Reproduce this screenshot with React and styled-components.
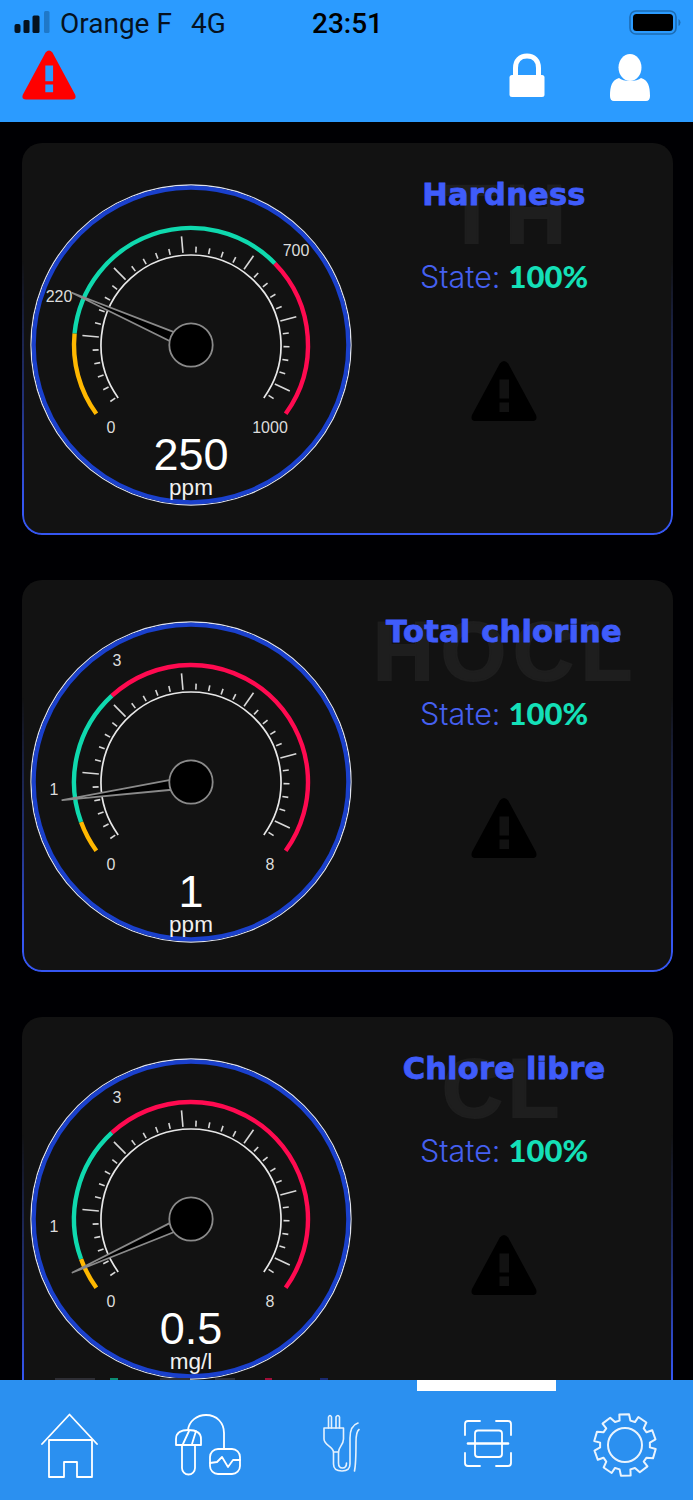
import React from 'react';
import styled, { createGlobalStyle } from 'styled-components';

const GlobalStyle = createGlobalStyle`
	html, body {
		margin: 0;
		padding: 0;
		background: #000;
	}
	#root {
		width: 693px;
		height: 1500px;
	}
`;

const Page = styled.div`
	width: 693px;
	height: 1500px;
	display: flex;
	flex-direction: column;
	overflow: hidden;
	background: #000003;
	font-family: "Liberation Sans", Arial, sans-serif;
`;

const Header = styled.header`
	height: 122px;
	flex: none;
	background: #2b9bff;
	box-sizing: border-box;
`;

const StatusBar = styled.div`
	height: 46px;
	display: grid;
	grid-template-columns: 1fr auto 1fr;
	align-items: center;
	padding: 0 12px 0 14px;
	font-family: Roboto, "Liberation Sans", sans-serif;
	font-size: 28px;
	color: #06121f;
`;

const Carrier = styled.div`
	display: flex;
	align-items: center;
	gap: 10px;
`;

const NetworkType = styled.span`
	margin-left: 9px;
`;

const Clock = styled.div`
	font-weight: 500;
	font-size: 28px;
	color: #000;
`;

const BatteryBox = styled.div`
	display: flex;
	justify-content: flex-end;
`;

const ActionBar = styled.div`
	display: flex;
	align-items: flex-start;
	padding: 4px 43px 0 22px;
`;

const ActionSpacer = styled.div`
	flex: 1;
`;

const ActionIcons = styled.div`
	display: flex;
	align-items: flex-start;
	gap: 65px;
	padding-top: 3px;
`;

const Main = styled.main`
	flex: 1;
	min-height: 0;
	position: relative;
	overflow: hidden;
	padding: 21px 20px 0 22px;
	display: flex;
	flex-direction: column;
	gap: 45px;
`;

const Card = styled.section`
	position: relative;
	flex: none;
	height: 392px;
	box-sizing: border-box;
	display: flex;
	padding: 37px 0 0 4px;
	background: #121212;
	border-radius: 20px;

	&::after {
		content: "";
		position: absolute;
		inset: 0;
		border: 2px solid #3556f2;
		border-radius: 20px;
		pointer-events: none;
		-webkit-mask-image: linear-gradient(to bottom, transparent 30%, rgba(0, 0, 0, 0.45) 65%, #000 92%);
		mask-image: linear-gradient(to bottom, transparent 30%, rgba(0, 0, 0, 0.45) 65%, #000 92%);
	}
`;

const GaugeSvg = styled.svg`
	display: block;
	flex: none;
	width: 330px;
	height: 330px;
`;

const GaugeLabel = styled.text`
	font-family: "Liberation Sans", Arial, sans-serif;
	font-size: 16px;
	fill: #dcdcdc;
	text-anchor: middle;
	dominant-baseline: central;
`;

const GaugeValue = styled.text`
	font-family: "Liberation Sans", Arial, sans-serif;
	font-size: 45px;
	fill: #fff;
	text-anchor: middle;
`;

const GaugeUnit = styled.text`
	font-family: "Liberation Sans", Arial, sans-serif;
	font-size: 22.5px;
	fill: #f0f0f0;
	text-anchor: middle;
`;

const Info = styled.div`
	position: relative;
	flex: 1;
	display: flex;
	flex-direction: column;
	align-items: center;
	padding: 0 21px 0 0;
	margin-top: -37px;
`;

const Watermark = styled.div`
	position: absolute;
	left: ${p => p.$left}px;
	top: 35px;
	font-family: "Liberation Sans", Arial, sans-serif;
	font-weight: 700;
	font-size: 84px;
	line-height: 72px;
	letter-spacing: ${p => p.$spacing}px;
	color: #1e1e1e;
	-webkit-text-stroke: 2px #1e1e1e;
	white-space: nowrap;
`;

const Title = styled.h2`
	position: relative;
	margin: 32px 0 0;
	height: 40px;
	font-family: "DejaVu Sans", "Liberation Sans", sans-serif;
	font-weight: 700;
	font-size: 30.5px;
	line-height: 40px;
	letter-spacing: 0.2px;
	color: #3f5cfb;
	-webkit-text-stroke: 0.8px #3f5cfb;
	white-space: nowrap;
`;

const StateRow = styled.div`
	position: relative;
	margin-top: 41px;
	display: flex;
	align-items: baseline;
	gap: 8px;
	height: 40px;
	line-height: 40px;
`;

const StateLabel = styled.span`
	font-family: Inter, Roboto, sans-serif;
	font-weight: 300;
	font-size: 30.5px;
	color: #4560f0;
`;

const StateValue = styled.span`
	font-family: Lato, "Liberation Sans", sans-serif;
	font-weight: 900;
	font-size: 31px;
	color: #14e0b8;
`;

const CardWarning = styled.div`
	margin-top: 65px;
`;

const ClippedLegend = styled.div`
	position: absolute;
	left: 0;
	bottom: 0;
	display: flex;
`;

const LegendDash = styled.span`
	margin-left: ${p => p.$gap}px;
	width: ${p => p.$w}px;
	height: 2px;
	background: ${p => p.$color};
`;

const TabBar = styled.nav`
	position: relative;
	flex: none;
	height: 120px;
	background: #2b90f0;
	display: grid;
	grid-template-columns: 140px 124px 150px 132px 1fr;
	align-items: start;
	padding-top: 33px;
	box-sizing: border-box;
`;

const ActiveMark = styled.div`
	position: absolute;
	left: 417px;
	top: 0;
	width: 139px;
	height: 11px;
	background: #fff;
`;

const Tab = styled.div`
	display: flex;
	padding-left: ${p => p.$pad}px;
	padding-top: ${p => p.$top || 0}px;
	svg {
		display: block;
	}
`;

const rad = d => (d - 90) * Math.PI / 180;
const polar = (angle, r) => [165 + r * Math.cos(rad(angle)), 165 + r * Math.sin(rad(angle))];

const arcPath = (from, to, r) => {
	const [x1, y1] = polar(from, r);
	const [x2, y2] = polar(to, r);
	return `M${x1} ${y1}A${r} ${r} 0 ${to - from > 180 ? 1 : 0} 1 ${x2} ${y2}`;
};

const ticks = Array.from({ length: 32 }, (_, i) => i);

const Gauge = ({ zones, labels, needle, value, unit }) => (
	<GaugeSvg viewBox="0 0 330 330">
		<circle cx="165" cy="165" r="160" fill="none" stroke="#dfe2ec" strokeWidth="1.3" />
		<circle cx="165" cy="165" r="157.3" fill="none" stroke="#1a40cc" strokeWidth="4.2" />
		{zones.map((z, i) => (
			<path key={i} d={arcPath(z.from, z.to, 117)} fill="none" stroke={z.color} strokeWidth="4.4" />
		))}
		<path d={arcPath(-126, 126, 90)} fill="none" stroke="#e8e8e8" strokeWidth="1.7" />
		{ticks.map(i => {
			const angle = -125 + i * 8;
			const major = i > 0 && i % 5 === 0;
			const [x1, y1] = polar(angle, 92.5);
			const [x2, y2] = polar(angle, major ? 109 : 98.5);
			return <line key={i} x1={x1} y1={y1} x2={x2} y2={y2} stroke="#d8d8d8" strokeWidth="1.6" />;
		})}
		{labels.map(l => (
			<GaugeLabel key={l.text} x={165 + l.x} y={165 + l.y}>{l.text}</GaugeLabel>
		))}
		<GaugeValue x="165" y="290">{value}</GaugeValue>
		<GaugeUnit x="165" y="315">{unit}</GaugeUnit>
		<polygon
			points="165,35 160,145 170,145"
			fill="#000"
			stroke="#8a8a8a"
			strokeWidth="1.8"
			strokeLinejoin="round"
			transform={`rotate(${needle} 165 165)`}
		/>
		<circle cx="165" cy="165" r="21.7" fill="#000" stroke="#8a8a8a" strokeWidth="1.8" />
	</GaugeSvg>
);

const WARNING = 'M28.8 2.5Q33-2.5 37.2 2.5L65 54Q67 60 61 60H5Q-1 60 1 54ZM28.5 18.5H38V37.5H28.5ZM28.5 41.5H38V51H28.5Z';

const WarningIcon = ({ width, height, color }) => (
	<svg width={width} height={height} viewBox="0 0 66 60" style={{ display: 'block' }}>
		<path d={WARNING} fill={color} fillRule="evenodd" />
	</svg>
);

const SignalIcon = () => (
	<svg width="36" height="24" viewBox="0 0 36 24" style={{ display: 'block' }}>
		<rect x="0.5" y="13" width="6" height="9" rx="2" fill="#06121f" />
		<rect x="9.5" y="9" width="6" height="13" rx="1.5" fill="#06121f" />
		<rect x="18.5" y="4.5" width="7" height="17.5" rx="1.5" fill="#06121f" />
		<rect x="30" y="0" width="5.5" height="22" rx="1.5" fill="#1f78c8" />
	</svg>
);

const BatteryIcon = () => (
	<svg width="52" height="26" viewBox="0 0 52 26" style={{ display: 'block' }}>
		<rect x="1" y="1" width="46" height="23" rx="6" fill="none" stroke="#1d6cb4" strokeWidth="1.6" />
		<rect x="4" y="4" width="40" height="17" rx="3.5" fill="#000" />
		<path d="M49.5 9Q51.5 10 51.5 12.5T49.5 16Z" fill="#1d6cb4" />
	</svg>
);

const LockIcon = () => (
	<svg width="36" height="44" viewBox="0 0 36 44" style={{ display: 'block' }}>
		<path d="M6.5 24V15C6.5 7.5 11 3 18 3S29.5 7.5 29.5 15V24" fill="none" stroke="#fff" strokeWidth="5" />
		<rect x="0.5" y="22" width="35" height="22" rx="2.5" fill="#fff" />
	</svg>
);

const UserIcon = () => (
	<svg width="40" height="47" viewBox="0 0 40 47" style={{ display: 'block', marginTop: 1 }}>
		<path d="M4 47Q0 47 0 42C0 32 2 26 9 24C13 28 27 28 31 24C38 26 40 32 40 42Q40 47 36 47Z" fill="#fff" />
		<ellipse cx="20" cy="13.5" rx="11.5" ry="13.5" fill="#fff" />
	</svg>
);

const lineProps = {
	fill: 'none',
	stroke: '#fff',
	strokeWidth: 1.8,
	strokeLinecap: 'round',
	strokeLinejoin: 'round',
};

const HomeIcon = () => (
	<svg width="57" height="66" viewBox="-1 -1 57 66" {...lineProps}>
		<path d="M0 30L27.5 0.5L55 30" />
		<path d="M7 26H50V63H35V48H22V63H7Z" />
	</svg>
);

const ProbeIcon = () => (
	<svg width="67" height="62" viewBox="-1 -1 67 62" {...lineProps}>
		<path d="M1 30V24C1 17 7 15 13 15C20 15 26 17 26 24V30Z" />
		<path d="M8 29L14 16M17 29L21 16" />
		<path d="M7 30V53A6.5 6.5 0 0 0 20 53V30" />
		<path d="M13 15C14 6 22 0 31 0C42 0 49 8 49 18V34" />
		<rect x="35" y="34" width="30" height="25" rx="8" />
		<path d="M35 48L42 47L47 42L53 52L58 45H65" />
	</svg>
);

const PlugIcon = () => (
	<svg width="38" height="60" viewBox="-1 -1 38 60" {...lineProps} strokeWidth="1.6" opacity="0.88">
		<path d="M5.5 14V3Q7 0 8.5 3V14M13 14V3Q15 0 16.5 3V14" />
		<path d="M1 14H20.5V25C20.5 31 15.5 33 15.5 38H10.5C10.5 33 1 31 1 25Z" />
		<path d="M10.5 38V50C10.5 55 14 57 19 57C24 57 27 55 27 50V24C27 16 29 11 35 9" />
		<path d="M15.5 38V49C15.5 53 17 54 19.5 54C22.5 54 23.5 52 23.5 49" />
		<path d="M31.5 57C33 50 33 40 33 28C33 20 34 17 36 15.5" />
	</svg>
);

const ScanIcon = () => (
	<svg width="50" height="49" viewBox="-1 -1 50 49" {...lineProps}>
		<path d="M16 1H4Q1 1 1 4V15M32 1H44Q47 1 47 4V15M1 33V43Q1 46 4 46H16M47 33V43Q47 46 44 46H32" />
		<rect x="11" y="10.5" width="27" height="26.5" rx="3" />
		<path d="M4 23.5H44" strokeWidth="2.6" />
	</svg>
);

const gearPath = () => {
	const teeth = 10;
	const pts = [];
	for (let i = 0; i < teeth; i++) {
		const step = 360 / teeth;
		const a = i * step - 90;
		[[-10.5, 31], [10.5 - 3, 31], [10.5 + 2, 25], [step - 12.5, 25]].forEach(([off, r]) => {
			const t = (a + off) * Math.PI / 180;
			pts.push(`${(32 + r * Math.cos(t)).toFixed(2)} ${(32 + r * Math.sin(t)).toFixed(2)}`);
		});
	}
	return `M${pts.join('L')}Z`;
};

const GearIcon = () => (
	<svg width="64" height="64" viewBox="0 0 64 64" {...lineProps} strokeWidth="2" opacity="0.9">
		<path d={gearPath()} />
		<circle cx="32" cy="32" r="17" />
	</svg>
);

const YELLOW = '#ffb800';
const GREEN = '#0fd9ae';
const RED = '#ff0a50';

const cards = [
	{
		title: 'Hardness',
		mark: 'TH',
		markLeft: 90,
		markSpacing: 8,
		value: '250',
		unit: 'ppm',
		needle: -66.3,
		zones: [
			{ from: -126, to: -84.3, color: YELLOW },
			{ from: -84.3, to: 45.8, color: GREEN },
			{ from: 45.8, to: 126, color: RED },
		],
		labels: [
			{ text: '0', x: -80, y: 82 },
			{ text: '1000', x: 79, y: 82 },
			{ text: '700', x: 105, y: -95 },
			{ text: '220', x: -132, y: -49 },
		],
	},
	{
		title: 'Total chlorine',
		mark: 'HOCL',
		markLeft: 17,
		markSpacing: 7,
		value: '1',
		unit: 'ppm',
		needle: -98,
		zones: [
			{ from: -126, to: -110, color: YELLOW },
			{ from: -110, to: -42.5, color: GREEN },
			{ from: -42.5, to: 126, color: RED },
		],
		labels: [
			{ text: '0', x: -80, y: 82 },
			{ text: '8', x: 79, y: 82 },
			{ text: '3', x: -74, y: -122 },
			{ text: '1', x: -137, y: 7 },
		],
	},
	{
		title: 'Chlore libre',
		mark: 'CL',
		markLeft: 86,
		markSpacing: 5,
		value: '0.5',
		unit: 'mg/l',
		needle: -114.3,
		zones: [
			{ from: -126, to: -110, color: YELLOW },
			{ from: -110, to: -42.5, color: GREEN },
			{ from: -42.5, to: 126, color: RED },
		],
		labels: [
			{ text: '0', x: -80, y: 82 },
			{ text: '8', x: 79, y: 82 },
			{ text: '3', x: -74, y: -122 },
			{ text: '1', x: -137, y: 7 },
		],
	},
];

// tops of a text line that the tab bar cuts off
const legendDashes = [
	{ gap: 55, w: 40, color: '#2e2e34' },
	{ gap: 15, w: 8, color: '#0c8c74' },
	{ gap: 42, w: 30, color: '#2e2e34' },
	{ gap: 25, w: 20, color: '#2e2e34' },
	{ gap: 30, w: 7, color: '#a00e38' },
	{ gap: 48, w: 8, color: '#1a2a70' },
];

const App = () => (
	<Page>
		<GlobalStyle />
		<Header>
			<StatusBar>
				<Carrier>
					<SignalIcon />
					<span>Orange F</span>
					<NetworkType>4G</NetworkType>
				</Carrier>
				<Clock>23:51</Clock>
				<BatteryBox><BatteryIcon /></BatteryBox>
			</StatusBar>
			<ActionBar>
				<WarningIcon width={54} height={50} color="#ff0000" />
				<ActionSpacer />
				<ActionIcons>
					<LockIcon />
					<UserIcon />
				</ActionIcons>
			</ActionBar>
		</Header>
		<Main>
			{cards.map(card => (
				<Card key={card.title}>
					<Gauge
						zones={card.zones}
						labels={card.labels}
						needle={card.needle}
						value={card.value}
						unit={card.unit}
					/>
					<Info>
						<Watermark $left={card.markLeft} $spacing={card.markSpacing}>{card.mark}</Watermark>
						<Title>{card.title}</Title>
						<StateRow>
							<StateLabel>State:</StateLabel>
							<StateValue>100%</StateValue>
						</StateRow>
						<CardWarning>
							<WarningIcon width={66} height={60} color="#000" />
						</CardWarning>
					</Info>
				</Card>
			))}
			<ClippedLegend>
				{legendDashes.map((d, i) => <LegendDash key={i} $gap={d.gap} $w={d.w} $color={d.color} />)}
			</ClippedLegend>
		</Main>
		<TabBar>
			<ActiveMark />
			<Tab $pad={41}><HomeIcon /></Tab>
			<Tab $pad={34} $top={1}><ProbeIcon /></Tab>
			<Tab $pad={58}><PlugIcon /></Tab>
			<Tab $pad={49} $top={6}><ScanIcon /></Tab>
			<Tab $pad={47}><GearIcon /></Tab>
		</TabBar>
	</Page>
);

export default App;
